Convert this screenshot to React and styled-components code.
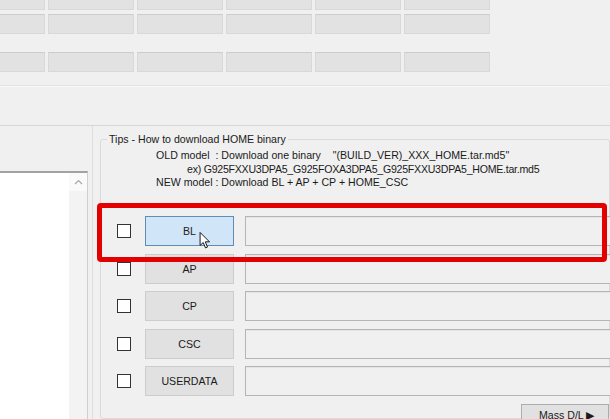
import React from "react";
import styled, { createGlobalStyle } from "styled-components";

const Global = createGlobalStyle`
  html, body { margin: 0; padding: 0; background: #f0f0f0; }
  body { font-family: "Liberation Sans", Arial, sans-serif; font-size: 11px; color: #111; }
  * { box-sizing: border-box; }
`;

const Screen = styled.div`
  position: relative;
  width: 610px;
  height: 419px;
  overflow: hidden;
  background: #f0f0f0;
  display: flex;
  flex-direction: column;
`;

const TopArea = styled.div`
  height: 125px;
  display: flex;
  flex-direction: column;
  flex-shrink: 0;
`;

const CellRow = styled.div`
  display: grid;
  grid-template-columns: repeat(6, 86px);
  column-gap: 3px;
  margin-left: -41px;
  margin-top: ${(p) => p.$top}px;
  height: 20px;
`;

const Cell = styled.div`
  background: #e2e2e2;
  border: 1px solid #d8d8d8;
  border-top-color: #cccccc;
`;

const Separator = styled.div`
  margin-top: ${(p) => p.$top}px;
  height: 2px;
  border-top: 1px solid #e2e2e2;
  border-bottom: 1px solid #f8f8f8;
`;

const TabPage = styled.div`
  flex: 1;
  display: flex;
  border-top: 1px solid #d6d6d6;
  min-height: 0;
`;

const LeftColumn = styled.div`
  width: 93px;
  flex-shrink: 0;
  border-right: 1px solid #dedede;
  padding-top: 45px;
  display: flex;
  flex-direction: column;
`;

const ListBox = styled.div`
  width: 88px;
  flex: 1;
  display: flex;
  border-top: 2px solid #a2a2a2;
  border-right: 1px solid #cfcfcf;
`;

const ListArea = styled.div`
  flex: 1;
  background: #ffffff;
`;

const ScrollBar = styled.div`
  width: 18px;
  background: #f3f3f3;
  display: flex;
  flex-direction: column;
`;

const ScrollButton = styled.div`
  height: 18px;
  background: #fafafa;
  display: flex;
  align-items: center;
  justify-content: center;
`;

const GroupBox = styled.fieldset`
  margin: 7px 0 0 7px;
  padding: 3px 0 0 16px;
  border: 1px solid #dadada;
  border-radius: 3px;
  width: 560px;
  min-width: 0;
  display: flex;
  flex-direction: column;
`;

const Legend = styled.legend`
  margin-left: -10px;
  padding: 0 2px;
  line-height: 13px;
  font-size: 10.6px;
  color: #1a1a1a;
`;

const TipLine = styled.div`
  white-space: pre;
  line-height: 13.5px;
  font-size: 10.6px;
  letter-spacing: ${(p) => p.$tight || 0}px;
  padding-left: ${(p) => p.$indent}px;
  color: #1a1a1a;
`;

const Rows = styled.div`
  margin-top: 26.5px;
  display: flex;
  flex-direction: column;
  gap: 7.5px;
`;

const FileRow = styled.div`
  display: flex;
  align-items: center;
  height: 30px;
`;

const CheckBox = styled.div`
  width: 14px;
  height: 14px;
  border: 1px solid #333;
  background: #fff;
  flex-shrink: 0;
`;

const SlotButton = styled.div`
  margin-left: 14px;
  width: 89px;
  height: 30px;
  display: flex;
  align-items: center;
  justify-content: center;
  font-size: 10.6px;
  background: ${(p) => (p.$hover ? "#d0e6f8" : "#e1e1e1")};
  border: 1px solid ${(p) => (p.$hover ? "#5f8db8" : "#cdcdcd")};
  color: #1a1a1a;
  flex-shrink: 0;
`;

const PathField = styled.div`
  margin-left: 11px;
  width: 420px;
  height: 30px;
  flex-shrink: 0;
  background: #f0f0f0;
  border: 1px solid #b5b5b5;
  border-right: none;
  box-shadow: inset 0 1px 0 #e4e4e4;
`;

const Footer = styled.div`
  margin-top: 8px;
  padding-left: 404px;
  display: flex;
`;

const MassButton = styled.div`
  width: 100px;
  height: 30px;
  padding-top: 4px;
  padding-left: 17px;
  font-size: 10.6px;
  line-height: 12px;
  background: #e1e1e1;
  border: 1px solid #adadad;
  color: #1a1a1a;
  white-space: nowrap;
`;

const Highlight = styled.div`
  position: absolute;
  left: 97px;
  top: 203px;
  width: 510px;
  height: 59px;
  border: 5px solid #e30000;
  border-radius: 4px;
  pointer-events: none;
`;

const Cursor = styled.svg`
  position: absolute;
  left: 199px;
  top: 232px;
`;

const slots = [
  { label: "BL", hover: true },
  { label: "AP" },
  { label: "CP" },
  { label: "CSC" },
  { label: "USERDATA" },
];

function CellLine({ top }) {
  return (
    <CellRow $top={top}>
      {Array.from({ length: 6 }).map((_, i) => (
        <Cell key={i} />
      ))}
    </CellRow>
  );
}

export default function App() {
  return (
    <>
      <Global />
      <Screen>
        <TopArea>
          <CellLine top={-10} />
          <CellLine top={4} />
          <CellLine top={18} />
          <Separator $top={13} />
        </TopArea>
        <TabPage>
          <LeftColumn>
            <ListBox>
              <ListArea />
              <ScrollBar>
                <ScrollButton>
                  <svg width="9" height="6" viewBox="0 0 9 6">
                    <path d="M1 5 L4.5 1.5 L8 5" fill="none" stroke="#a8a8a8" strokeWidth="1.2" />
                  </svg>
                </ScrollButton>
              </ScrollBar>
            </ListBox>
          </LeftColumn>
          <GroupBox>
            <Legend>Tips - How to download HOME binary</Legend>
            <TipLine $indent={39}>{'OLD model  : Download one binary    "(BUILD_VER)_XXX_HOME.tar.md5"'}</TipLine>
            <TipLine $indent={70} $tight={-0.25}>ex) G925FXXU3DPA5_G925FOXA3DPA5_G925FXXU3DPA5_HOME.tar.md5</TipLine>
            <TipLine $indent={39}>NEW model : Download BL + AP + CP + HOME_CSC</TipLine>
            <Rows>
              {slots.map((s) => (
                <FileRow key={s.label}>
                  <CheckBox />
                  <SlotButton $hover={s.hover}>{s.label}</SlotButton>
                  <PathField />
                </FileRow>
              ))}
            </Rows>
            <Footer>
              <MassButton>Mass D/L ▶</MassButton>
            </Footer>
          </GroupBox>
        </TabPage>
        <Highlight />
        <Cursor width="12" height="17" viewBox="0 0 12 19">
          <path d="M0.5 0.5 L0.5 15 L4 11.8 L6.6 17.8 L8.8 16.8 L6.3 11 L11 11 Z" fill="#fff" stroke="#000" strokeWidth="1" strokeLinejoin="round" />
        </Cursor>
      </Screen>
    </>
  );
}
